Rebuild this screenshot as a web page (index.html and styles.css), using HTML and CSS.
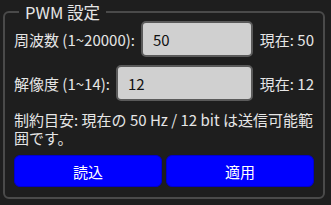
FILE: index.html
```html
<!DOCTYPE html>
<html lang="ja">
<head>
    <meta charset="UTF-8">
    <meta name="viewport" content="width=device-width, initial-scale=1.0">
    <title>PWM 設定</title>
    <link rel="stylesheet" href="styles.css">
</head>
<body>
    <fieldset class="pwm-box">
        <legend>PWM 設定</legend>
        <div class="pwm-row">
            <label for="freq">周波数 (1~20000):</label>
            <input type="text" id="freq" value="50">
            <span class="current">現在: 50</span>
        </div>
        <div class="pwm-row">
            <label for="res">解像度 (1~14):</label>
            <input type="text" id="res" value="12">
            <span class="current">現在: 12</span>
        </div>
        <p class="note">制約目安: 現在の 50 Hz / 12 bit は送信可能範囲です。</p>
        <div class="buttons">
            <button id="read-button">読込</button>
            <button id="apply-button">適用</button>
        </div>
    </fieldset>
</body>
</html>
```

FILE: styles.css
```css
body {
    margin: 0;
    padding: 4px 6px 0 3px;
    background-color: #1e1e1e;
    color: #e6e6e6;
    font-family: "Noto Sans CJK JP", "Noto Sans", sans-serif;
    font-size: 15px;
}
.pwm-box {
    margin: 0;
    min-width: 0;
    border: 2px solid #4a4a4a;
    border-radius: 6px;
    padding: 1px 9px 7px 9px;
    height: 195px;
    box-sizing: border-box;
}
.pwm-box legend {
    padding: 0 6px;
    margin-left: 5px;
    font-size: 16.5px;
    line-height: 16px;
}
.pwm-row {
    display: flex;
    align-items: center;
    margin-bottom: 8px;
}
.pwm-row label {
    margin-right: 6px;
    white-space: nowrap;
}
.pwm-row input {
    flex: 1;
    min-width: 0;
    height: 36px;
    box-sizing: border-box;
    background-color: #d0d0d0;
    border: 2px solid #5a5a5a;
    border-radius: 5px;
    padding: 0 10px;
    font-family: inherit;
    font-size: 15px;
    color: #111;
}
.pwm-row .current {
    margin-left: 7px;
    white-space: nowrap;
}
.note {
    margin: 10px 0 8px 0;
    line-height: 18px;
}
.buttons {
    display: flex;
    gap: 4px;
}
.buttons button {
    flex: 1;
    height: 32px;
    background-color: #0000ff;
    color: white;
    border: 1px solid #0000cc;
    border-radius: 6px;
    font-family: inherit;
    font-size: 15px;
    cursor: pointer;
}
```
